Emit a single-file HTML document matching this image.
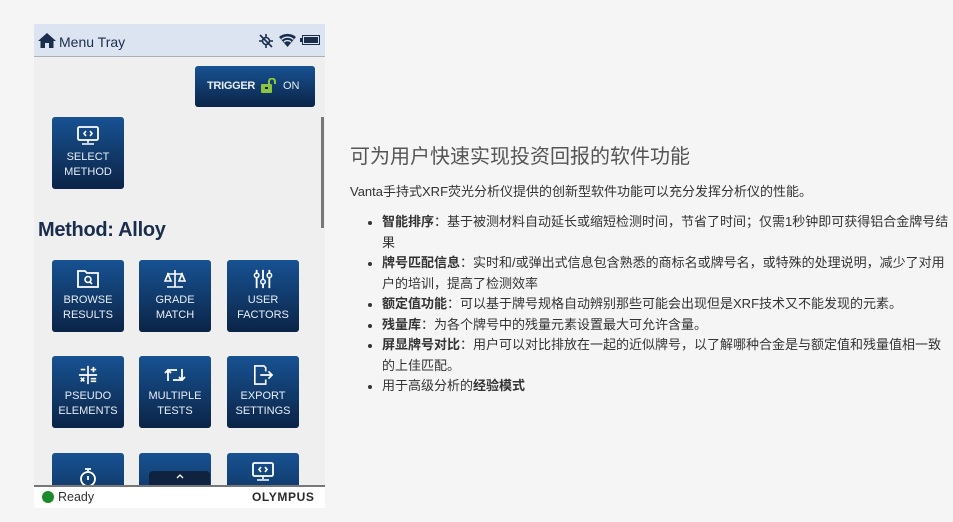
<!DOCTYPE html>
<html><head><meta charset="utf-8"><style>
*{margin:0;padding:0;box-sizing:border-box}
body{width:953px;height:522px;background:#f5f5f5;font-family:"Liberation Sans","Noto Sans CJK SC",sans-serif;position:relative;overflow:hidden}
.dev{position:absolute;left:34px;top:24px;width:291px;height:484px;background:#efefef;overflow:hidden}
.hdr{position:absolute;left:0;top:0;width:291px;height:33px;background:#dbe4f0;border-bottom:1px solid #aab0b8}
.hdr .t{position:absolute;left:25px;top:10px;font-size:14px;color:#1b2d4d}
.btn{position:absolute;width:72px;height:72px;border-radius:3px;background:linear-gradient(#175292,#0b2447);color:#e8eef6;font-size:11px;text-align:center;line-height:14.5px}
.btn svg{display:block;margin:9px auto 4px}
.ftr{position:absolute;left:0;top:461px;width:291px;height:23px;background:#fff;border-top:2px solid #777}
.r{position:absolute;left:350px;color:#333}
ul{position:absolute;left:367px;top:212px;width:582px;font-size:13px;line-height:20.5px;color:#333;list-style:none}
li{position:relative;padding-left:15px}
li:before{content:"";position:absolute;left:1px;top:9px;width:4px;height:4px;border-radius:2px;background:#333}
b{font-weight:bold}
</style></head><body>
<div class="dev">
 <div class="hdr">
  <svg style="position:absolute;left:4px;top:9px" width="18" height="15" viewBox="0 0 18 15"><path d="M9 0L0 8h2.5v7h4.5v-5h4v5h4.5V8H18z" fill="#1b2d4d"/></svg>
  <span class="t">Menu Tray</span>
  <svg style="position:absolute;left:224px;top:10px" width="16" height="14" viewBox="0 0 16 14"><circle cx="8" cy="7" r="3.5" fill="none" stroke="#1b2d4d" stroke-width="1.6"/><path d="M2 1l12 12M8 0v3M8 11v3M1 7h3M12 7h3" stroke="#1b2d4d" stroke-width="1.6"/></svg>
  <svg style="position:absolute;left:245px;top:9px" width="17" height="14" viewBox="0 0 17 14"><path d="M8.5 14L0 4a13 13 0 0117 0z" fill="#1b2d4d"/><path d="M2.5 6.5a9 9 0 0112 0M5 9a5 5 0 017 0" stroke="#dbe4f0" stroke-width="1.3" fill="none"/></svg>
  <div style="position:absolute;left:268px;top:11px;width:18px;height:10px;border:1.5px solid #1b2d4d;background:#1b2d4d;box-shadow:inset 0 0 0 1px #dbe4f0"></div>
  <div style="position:absolute;left:266px;top:14px;width:2px;height:4px;background:#1b2d4d"></div>
 </div>
 <div style="position:absolute;left:161px;top:42px;width:120px;height:41px;border-radius:3px;background:linear-gradient(#175292,#0b2447);color:#e8eef6;font-size:11px;font-weight:bold">
  <span style="position:absolute;left:12px;top:14px;letter-spacing:-0.3px">TRIGGER</span>
  <svg style="position:absolute;left:66px;top:12px" width="18" height="16" viewBox="0 0 18 16"><rect x="0" y="6" width="11" height="9" rx="1" fill="#8cc63f"/><path d="M8 6V3.5a3 3 0 016 0V6" stroke="#8cc63f" stroke-width="2" fill="none"/><rect x="4" y="9" width="3" height="2" fill="#0b2447"/></svg>
  <span style="position:absolute;left:88px;top:14px;font-weight:normal">ON</span>
 </div>
 <div style="position:absolute;left:287px;top:93px;width:3px;height:111px;background:#777"></div>
 <div class="btn" style="left:18px;top:93px"><svg width="22" height="20" viewBox="0 0 22 20"><rect x="1" y="1" width="20" height="13" rx="1.5" fill="none" stroke="#fff" stroke-width="1.8"/><path d="M9 5l-2 2.5L9 10M13 5l2 2.5-2 2.5M11 14v3M5 18h12" stroke="#fff" stroke-width="1.6" fill="none"/></svg>SELECT<br>METHOD</div>
 <div style="position:absolute;left:4px;top:195px;font-size:20px;font-weight:bold;color:#1b2d4d;letter-spacing:-0.3px">Method: Alloy</div>
 <div class="btn" style="left:18px;top:236px"><svg width="22" height="20" viewBox="0 0 22 20"><path d="M1 2h7l2 2h11v14H1z" fill="none" stroke="#fff" stroke-width="1.8"/><circle cx="11" cy="10.5" r="3" fill="none" stroke="#fff" stroke-width="1.6"/><path d="M13 13l2 2" stroke="#fff" stroke-width="1.6"/></svg>BROWSE<br>RESULTS</div>
 <div class="btn" style="left:105px;top:236px"><svg width="22" height="20" viewBox="0 0 22 20"><path d="M11 1v17M3 18h16M3 5h16M4 5l-3 7h6zM18 5l-3 7h6z" stroke="#fff" stroke-width="1.6" fill="none"/></svg>GRADE<br>MATCH</div>
 <div class="btn" style="left:193px;top:236px"><svg width="22" height="20" viewBox="0 0 22 22"><path d="M4 1v20M11 1v20M18 1v20" stroke="#fff" stroke-width="2"/><circle cx="4" cy="7" r="2.5" fill="#175292" stroke="#fff" stroke-width="1.6"/><circle cx="11" cy="14" r="2.5" fill="#175292" stroke="#fff" stroke-width="1.6"/><circle cx="18" cy="7" r="2.5" fill="#175292" stroke="#fff" stroke-width="1.6"/></svg>USER<br>FACTORS</div>
 <div class="btn" style="left:18px;top:332px"><svg width="22" height="20" viewBox="0 0 22 22"><path d="M11 1v20M1 11h20M3 5h5M14 5h6M17 2v6M3 14l4 4M7 14l-4 4M14 15h6M14 18h6" stroke="#fff" stroke-width="1.8"/></svg>PSEUDO<br>ELEMENTS</div>
 <div class="btn" style="left:105px;top:332px"><svg width="22" height="20" viewBox="0 0 22 20"><path d="M4 16V5h9M1 8l3-3 3 3M18 4v11H9M15 12l3 3 3-3" stroke="#fff" stroke-width="1.8" fill="none"/></svg>MULTIPLE<br>TESTS</div>
 <div class="btn" style="left:193px;top:332px"><svg width="22" height="20" viewBox="0 0 22 22"><path d="M14 7V3l-2-2H2v20h12v-5M8 11h13M17 7l4 4-4 4" stroke="#fff" stroke-width="1.8" fill="none"/></svg>EXPORT<br>SETTINGS</div>
 <div class="btn" style="left:18px;top:429px"><svg width="22" height="20" viewBox="0 0 22 20" style="margin-top:14px"><circle cx="11" cy="12" r="7" fill="none" stroke="#fff" stroke-width="1.8"/><path d="M8 2h6M11 2v3M11 9v4" stroke="#fff" stroke-width="1.8"/></svg></div>
 <div class="btn" style="left:105px;top:429px"></div>
 <div class="btn" style="left:193px;top:429px"><svg width="22" height="20" viewBox="0 0 22 20"><rect x="1" y="1" width="20" height="13" rx="1.5" fill="none" stroke="#fff" stroke-width="1.8"/><path d="M9 5l-2 2.5L9 10M13 5l2 2.5-2 2.5M11 14v3M5 18h12" stroke="#fff" stroke-width="1.6" fill="none"/></svg></div>
 <div style="position:absolute;left:115px;top:447px;width:61px;height:14px;border-radius:4px 4px 0 0;background:#0f2240"><svg style="position:absolute;left:27px;top:3px" width="8" height="5" viewBox="0 0 8 5"><path d="M1 4l3-3 3 3" stroke="#fff" stroke-width="1.3" fill="none"/></svg></div>
 <div class="ftr">
  <div style="position:absolute;left:8px;top:4px;width:12px;height:12px;border-radius:6px;background:#1a8a2a"></div>
  <span style="position:absolute;left:24px;top:3px;font-size:12.5px;color:#333">Ready</span>
  <span style="position:absolute;left:218px;top:3px;font-size:12px;font-weight:900;color:#2a2a2a;letter-spacing:0.6px">OLYMPUS</span>
 </div>
</div>
<div class="r" style="top:140px;font-size:20px;color:#555">可为用户快速实现投资回报的软件功能</div>
<div class="r" style="top:181px;font-size:13px">Vanta手持式XRF荧光分析仪提供的创新型软件功能可以充分发挥分析仪的性能。</div>
<ul>
<li><b>智能排序</b>：基于被测材料自动延长或缩短检测时间，节省了时间；仅需1秒钟即可获得铝合金牌号结果</li>
<li><b>牌号匹配信息</b>：实时和/或弹出式信息包含熟悉的商标名或牌号名，或特殊的处理说明，减少了对用户的培训，提高了检测效率</li>
<li><b>额定值功能</b>：可以基于牌号规格自动辨别那些可能会出现但是XRF技术又不能发现的元素。</li>
<li><b>残量库</b>：为各个牌号中的残量元素设置最大可允许含量。</li>
<li><b>屏显牌号对比</b>：用户可以对比排放在一起的近似牌号，以了解哪种合金是与额定值和残量值相一致的上佳匹配。</li>
<li>用于高级分析的<b>经验模式</b></li>
</ul>
</body></html>
